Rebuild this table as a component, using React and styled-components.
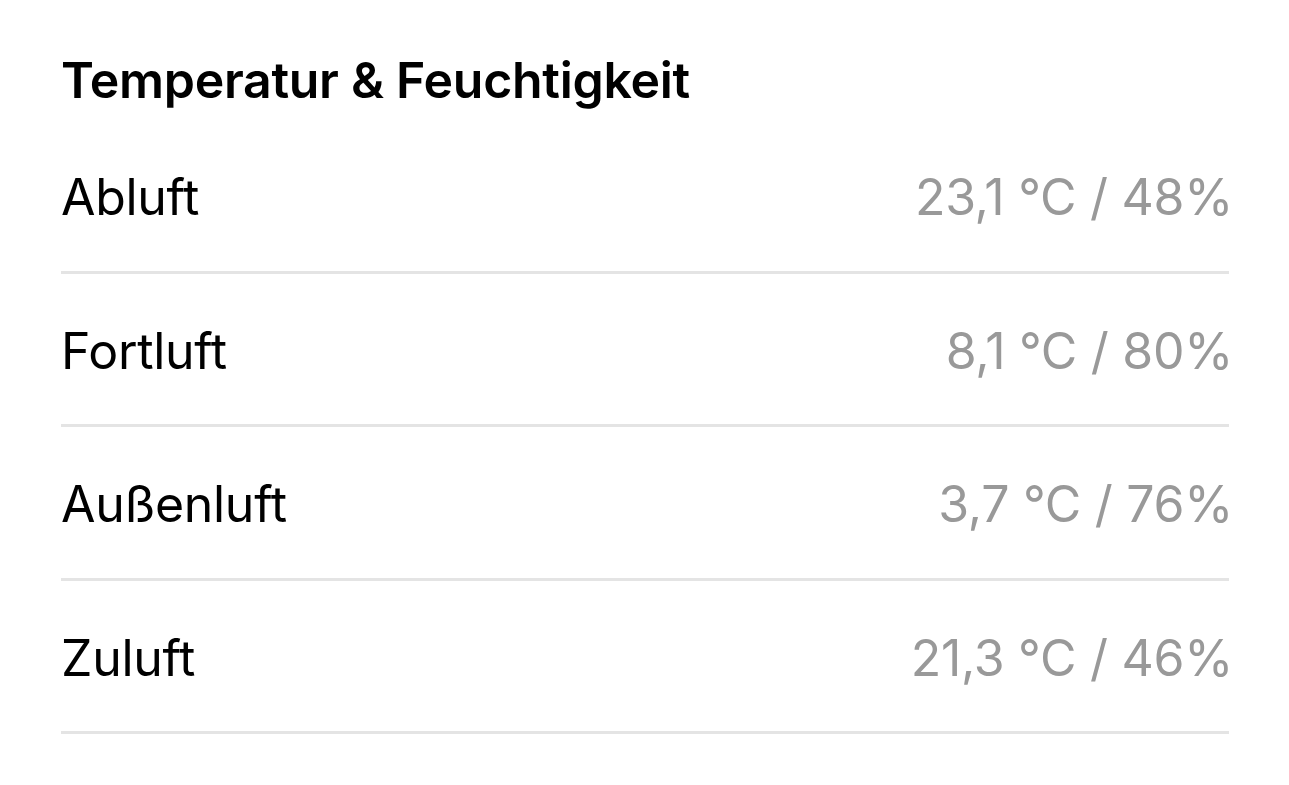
import styled, { createGlobalStyle } from "styled-components"

const GlobalStyle = createGlobalStyle`
  html, body {
    margin: 0;
    padding: 0;
    background: #ffffff;
  }
  body {
    font-family: Inter, "Noto Sans", "Liberation Sans", sans-serif;
    -webkit-font-smoothing: antialiased;
  }
`

const readings = [
    { name: "Abluft", value: "23,1 °C / 48%" },
    { name: "Fortluft", value: "8,1 °C / 80%" },
    { name: "Außenluft", value: "3,7 °C / 76%" },
    { name: "Zuluft", value: "21,3 °C / 46%" },
]

export default function App() {
    return <>
        <GlobalStyle />
        <Section>
            <Title>Temperatur &amp; Feuchtigkeit</Title>
            <List>
                {readings.map(r => (
                    <Row key={r.name}>
                        <Label>{r.name}</Label>
                        <Value>{r.value}</Value>
                    </Row>
                ))}
            </List>
        </Section>
    </>
}

const Section = styled.section`
    width: 1289px;
    height: 785px;
    box-sizing: border-box;
    padding: 0 60px 0 61px;
    background: #fff;
`

const Title = styled.h2`
    margin: 0;
    height: 120px;
    box-sizing: border-box;
    padding-top: 40px;
    display: flex;
    align-items: center;
    font-size: 50px;
    font-weight: 600;
    color: #000;
    letter-spacing: -0.3px;
    line-height: 1;
`

const List = styled.ul`
    list-style: none;
    margin: 0;
    padding: 0;
`

const Row = styled.li`
    height: 153.5px;
    box-sizing: border-box;
    padding-top: 4px;
    display: flex;
    align-items: center;
    justify-content: space-between;
    border-bottom: 3px solid #e4e4e4;
`

const Label = styled.span`
    font-size: 50px;
    font-weight: 400;
    color: #000;
    letter-spacing: -0.3px;
`

const Value = styled.span`
    margin-right: -4px;
    font-size: 50px;
    font-weight: 400;
    color: #999999;
    letter-spacing: -0.3px;
`
